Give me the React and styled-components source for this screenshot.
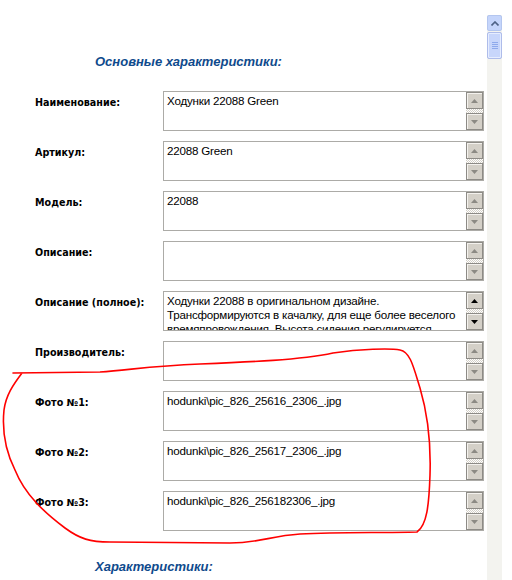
import styled, { createGlobalStyle } from "styled-components";

const GlobalStyle = createGlobalStyle`
  body {
    margin: 0;
    background: #ffffff;
    font-family: "Liberation Sans", Arial, sans-serif;
  }
`;

const fields = [
  { label: "Наименование:", value: "Ходунки 22088 Green" },
  { label: "Артикул:", value: "22088 Green" },
  { label: "Модель:", value: "22088" },
  { label: "Описание:", value: "" },
  {
    label: "Описание (полное):",
    value:
      "Ходунки 22088 в оригинальном дизайне. Трансформируются в качалку, для еще более веселого времяпровождения. Высота сидения регулируется.",
    active: true,
  },
  { label: "Производитель:", value: "" },
  { label: "Фото №1:", value: "hodunki\\pic_826_25616_2306_.jpg" },
  { label: "Фото №2:", value: "hodunki\\pic_826_25617_2306_.jpg" },
  { label: "Фото №3:", value: "hodunki\\pic_826_256182306_.jpg" },
];

const Arrow = ({ up, active }) => (
  <svg width="7" height="4" viewBox="0 0 7 4">
    <path
      d={up ? "M0 4 L3.5 0 L7 4 Z" : "M0 0 L3.5 4 L7 0 Z"}
      fill={active ? "#000000" : "#8c8a84"}
    />
  </svg>
);

const App = () => {
  return (
    <>
      <GlobalStyle />
      <Page>
        <Content>
          <SectionTitle>Основные характеристики:</SectionTitle>
          <Form>
            {fields.map((field, index) => (
              <Row key={index}>
                <Label>{field.label}</Label>
                <Field>
                  <FieldText>{field.value}</FieldText>
                  <MiniScroll>
                    <MiniButton>
                      <Arrow up active={field.active} />
                    </MiniButton>
                    <Checker />
                    <MiniButton>
                      <Arrow active={field.active} />
                    </MiniButton>
                  </MiniScroll>
                </Field>
              </Row>
            ))}
          </Form>
          <SectionTitle>Характеристики:</SectionTitle>
          <Scribble width="512" height="580" viewBox="0 0 512 580">
            <path
              d="M13 373 L100 372 C130 370 150 366 200 364 C250 362 300 360 333 353 C360 349 390 348 400 350 C410 352 413 365 420 388 C428 415 431 445 430 475 C429 505 427 525 417 532 C380 533 340 532 300 534 C270 536 260 543 230 543 L110 542 C90 542 80 539 65 528 C45 513 25 495 15 470 C5 450 2 430 4 410 C6 395 13 385 22 373"
              fill="none"
              stroke="#ff0000"
              strokeWidth="1.6"
              strokeLinecap="round"
            />
          </Scribble>
        </Content>
        <PageScroll>
          <PageScrollUp>
            <svg width="8" height="5" viewBox="0 0 8 5">
              <path d="M0.5 4.5 L4 1 L7.5 4.5" fill="none" stroke="#4d6185" strokeWidth="1.6" />
            </svg>
          </PageScrollUp>
          <PageThumb>
            <Grip />
            <Grip />
            <Grip />
            <Grip />
          </PageThumb>
        </PageScroll>
      </Page>
    </>
  );
};

export default App;

const Page = styled.div`
  width: 512px;
  height: 580px;
  display: flex;
  overflow: hidden;
`;

const Content = styled.div`
  position: relative;
  width: 487px;
  padding-top: 53px;
  box-sizing: border-box;
`;

const SectionTitle = styled.div`
  padding-left: 95px;
  font-family: "Liberation Sans", Arial, sans-serif;
  font-size: 13px;
  font-weight: 700;
  font-style: italic;
  color: #0f4a8c;
  height: 18px;
  line-height: 18px;
`;

const Form = styled.div`
  display: flex;
  flex-direction: column;
  gap: 10px;
  padding: 20px 0 27px;
`;

const Row = styled.div`
  display: flex;
  align-items: flex-start;
`;

const Label = styled.div`
  width: 128px;
  padding: 6px 0 0 35px;
  font-family: "DejaVu Sans", Verdana, sans-serif;
  font-size: 9.6px;
  font-weight: 700;
  color: #000000;
`;

const Field = styled.div`
  width: 321px;
  height: 40px;
  box-sizing: border-box;
  border: 1px solid #acaba7;
  background: #ffffff;
  display: flex;
  overflow: hidden;
`;

const FieldText = styled.div`
  flex: 1;
  padding: 2px 1px 2px 3px;
  font-size: 11.6px;
  letter-spacing: -0.2px;
  line-height: 14px;
  color: #000000;
  overflow: hidden;
`;

const MiniScroll = styled.div`
  width: 17px;
  display: flex;
  flex-direction: column;
`;

const MiniButton = styled.div`
  height: 17px;
  box-sizing: border-box;
  background: #d4d0c8;
  border: 1px solid #8d8b86;
  box-shadow: inset 1px 1px 0 #f4f2ee;
  display: flex;
  align-items: center;
  justify-content: center;
`;

const Checker = styled.div`
  flex: 1;
  background-color: #ffffff;
  background-image: repeating-conic-gradient(#d4d0c8 0 25%, #ffffff 0 50%);
  background-size: 2px 2px;
`;

const PageScroll = styled.div`
  width: 15px;
  margin-top: 15px;
  background: #f3f3ef;
  display: flex;
  flex-direction: column;
  align-items: center;
`;

const PageScrollUp = styled.div`
  width: 15px;
  height: 16px;
  box-sizing: border-box;
  border: 1px solid #b4c6ef;
  border-radius: 2px;
  background: #c5d5fb;
  display: flex;
  align-items: center;
  justify-content: center;
`;

const PageThumb = styled.div`
  width: 15px;
  height: 27px;
  margin-top: 1px;
  box-sizing: border-box;
  border: 1px solid #aebcea;
  border-radius: 2px;
  background: #c8d6fb;
  box-shadow: inset 0 0 0 1px #e6edff;
  display: flex;
  flex-direction: column;
  align-items: center;
  justify-content: center;
  gap: 1px;
`;

const Grip = styled.div`
  width: 6px;
  height: 1px;
  background: #8ea9ec;
`;

const Scribble = styled.svg`
  position: absolute;
  left: 0;
  top: 0;
  pointer-events: none;
`;
